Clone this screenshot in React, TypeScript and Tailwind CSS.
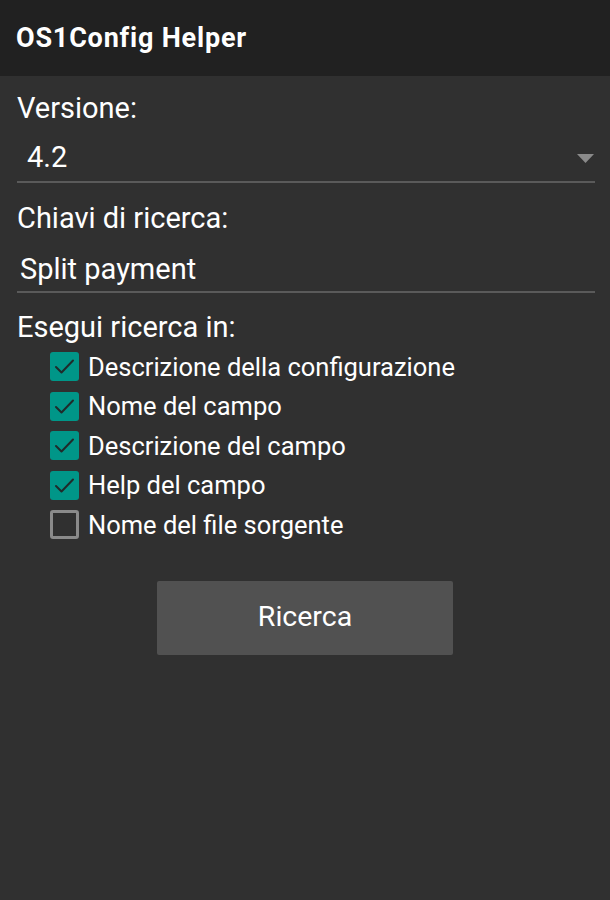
import React from "react";

const items = [
  { label: "Descrizione della configurazione", checked: true },
  { label: "Nome del campo", checked: true },
  { label: "Descrizione del campo", checked: true },
  { label: "Help del campo", checked: true },
  { label: "Nome del file sorgente", checked: false },
];

function Box({ checked }: { checked: boolean }) {
  if (checked) {
    return (
      <div className="w-[29px] h-[29px] rounded-[3px] bg-[#009688] flex items-center justify-center shrink-0">
        <svg width="29" height="29" viewBox="0 0 29 29" fill="none">
          <path d="M6 15l5.5 5.5L23 8.5" stroke="#1f2b2b" strokeWidth="2" strokeLinecap="round" strokeLinejoin="round" />
        </svg>
      </div>
    );
  }
  return <div className="w-[29px] h-[29px] rounded-[3px] border-[3px] border-[#8a8a8a] shrink-0" />;
}

export default function App() {
  return (
    <div className="w-[610px] h-[900px] bg-[#303030] text-white" style={{ fontFamily: "Roboto, 'Noto Sans', sans-serif" }}>
      <div className="h-[76px] bg-[#212121] flex items-center px-4">
        <span className="text-[27px] font-bold leading-none tracking-[0.8px]">OS1Config Helper</span>
      </div>
      <div className="pl-[17px] pr-[15px]">
        <div className="mt-[16px] text-[29px] leading-[32px]">Versione:</div>
        <div className="pt-[17px] pb-[8px] border-b-2 border-[#5a5a5a] flex items-center justify-between">
          <span className="pl-[10px] text-[29px] leading-[32px]">4.2</span>
          <svg width="17" height="9" viewBox="0 0 17 9" className="mt-[2px] mr-[1px]">
            <path d="M0 0h17L8.5 9z" fill="#8a8a8a" />
          </svg>
        </div>
        <div className="mt-[19px] text-[29px] leading-[32px]">Chiavi di ricerca:</div>
        <div className="pt-[19px] pb-[6px] border-b-2 border-[#5a5a5a]">
          <span className="pl-[3px] text-[29px] leading-[32px] block">Split payment</span>
        </div>
        <div className="mt-[18px] text-[29px] leading-[32px]">Esegui ricerca in:</div>
        <div className="mt-[4px] pl-[33px]">
          {items.map((it) => (
            <div key={it.label} className="h-[39.5px] flex items-center gap-[9px]">
              <Box checked={it.checked} />
              <span className="text-[25.5px] leading-[30px]">{it.label}</span>
            </div>
          ))}
        </div>
      </div>
      <div className="mt-[36px] flex justify-center">
        <button className="w-[296px] h-[74px] bg-[#515151] rounded-[2px] text-[28.5px] text-white">Ricerca</button>
      </div>
    </div>
  );
}
